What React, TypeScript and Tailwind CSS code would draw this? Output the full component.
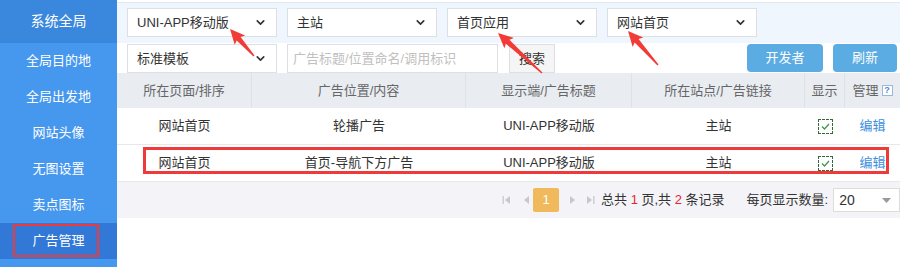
import React from 'react';
import { ChevronDown } from 'lucide-react';

const menu = ['全局目的地', '全局出发地', '网站头像', '无图设置', '卖点图标'];

const rows = [
  { page: '网站首页', pos: '轮播广告', client: 'UNI-APP移动版', site: '主站' },
  { page: '网站首页', pos: '首页-导航下方广告', client: 'UNI-APP移动版', site: '主站' },
];

type Pt = [number, number];

const arrowPoints = (tip: Pt, tail: Pt) => {
  const dx = tail[0] - tip[0];
  const dy = tail[1] - tip[1];
  const len = Math.hypot(dx, dy);
  const ux = dx / len;
  const uy = dy / len;
  const nx = -uy;
  const ny = ux;
  const bx = tip[0] + ux * 13;
  const by = tip[1] + uy * 13;
  const p = (x: number, y: number, k: number) => `${x + nx * k},${y + ny * k}`;
  return [
    `${tip[0]},${tip[1]}`,
    p(bx + ux * 2, by + uy * 2, 7),
    p(bx, by, 2.6),
    p(tail[0], tail[1], 0.7),
    p(tail[0], tail[1], -0.7),
    p(bx, by, -2.6),
    p(bx + ux * 2, by + uy * 2, -7),
  ].join(' ');
};

const arrows: { tip: Pt; tail: Pt }[] = [
  { tip: [230, 29], tail: [254, 56] },
  { tip: [498, 33], tail: [542, 73] },
  { tip: [628, 31], tail: [658, 65] },
];

const Select = ({ value, w = 'w-[150px]' }: { value: string; w?: string }) => (
  <div className={`${w} h-[29px] bg-white border border-[#dcdfe4] flex items-center justify-between pl-[9px] pr-[9px] text-[#333]`}>
    <span>{value}</span>
    <ChevronDown size={13} strokeWidth={3} className="text-[#333]" />
  </div>
);

const Check = () => (
  <div className="w-[15px] h-[15px] border border-dashed border-[#2f6b35] flex items-center justify-center">
    <svg width="9" height="7" viewBox="0 0 9 7">
      <path d="M1 3.5 L3.5 6 L8 1" fill="none" stroke="#3c9a4a" strokeWidth="1.3" />
    </svg>
  </div>
);

const PgIcon = ({ dir, bar }: { dir: 'l' | 'r'; bar?: boolean }) => (
  <svg width="9" height="10" viewBox="0 0 9 10">
    {dir === 'l' ? (
      <>
        {bar && <rect x="0.5" y="1" width="1.3" height="8" fill="#c8c8cc" />}
        <path d="M8 1 L3 5 L8 9 Z" fill="#c8c8cc" />
      </>
    ) : (
      <>
        <path d="M1 1 L6 5 L1 9 Z" fill="#c8c8cc" />
        {bar && <rect x="7.2" y="1" width="1.3" height="8" fill="#c8c8cc" />}
      </>
    )}
  </svg>
);

export default function App() {
  return (
    <div className="relative w-[900px] h-[267px] overflow-hidden bg-white flex text-[13px] font-['Liberation_Sans','Noto_Sans_CJK_SC',sans-serif]">
      {/* sidebar */}
      <div className="w-[117px] shrink-0 bg-[#4697ee] text-white flex flex-col">
        <div className="h-[43px] bg-[#3a87de] flex items-center justify-center text-[14px]">系统全局</div>
        {menu.map((m) => (
          <div key={m} className="h-[36px] flex items-center justify-center">{m}</div>
        ))}
        <div className="h-[36px] bg-[#3278d7] flex items-center justify-center">广告管理</div>
      </div>

      {/* main */}
      <div className="flex-1 flex flex-col pt-[2px]">
        <div className="h-[41px] border-t border-[#e3e8ef] bg-[#f0f6fd] flex items-start gap-[10px] pl-[10px] pt-[5px]">
          <Select value="UNI-APP移动版" />
          <Select value="主站" />
          <Select value="首页应用" />
          <Select value="网站首页" />
        </div>
        <div className="h-[30px] flex items-start pl-[10px] pt-[1px]">
          <Select value="标准模板" />
          <div className="ml-[10px] w-[211px] h-[29px] border border-[#dcdfe4] flex items-center pl-[5px] text-[#c0c0c0]">
            广告标题/位置命名/调用标识
          </div>
          <div className="ml-[11px] w-[46px] h-[29px] border border-[#dcdfe4] bg-[#f5f5f5] flex items-center justify-center text-[#333]">
            搜索
          </div>
          <div className="ml-auto flex gap-[10px] pr-[3px]">
            <div className="w-[76px] h-[28px] rounded-[4px] bg-[#5aace2] text-white flex items-center justify-center">开发者</div>
            <div className="w-[64px] h-[28px] rounded-[4px] bg-[#5aace2] text-white flex items-center justify-center">刷新</div>
          </div>
        </div>

        {/* table */}
        <div className="grid grid-cols-[135px_214px_166px_173px_40px_55px] h-[35px] bg-[#e9edf2] text-[#666]">
          {['所在页面/排序', '广告位置/内容', '显示端/广告标题', '所在站点/广告链接', '显示'].map((h) => (
            <div key={h} className="flex items-center justify-center border-r border-[#dde2e9]">{h}</div>
          ))}
          <div className="flex items-center justify-center gap-[3px]">
            管理
            <span className="w-[11px] h-[11px] border border-[#9bb8d8] bg-white text-[9px] leading-none font-bold text-[#4a8ad4] flex items-center justify-center">?</span>
          </div>
        </div>
        {rows.map((r, i) => (
          <div key={i} className="grid grid-cols-[135px_214px_166px_173px_40px_55px] h-[37px] border-b border-[#e6e8ec] text-[#333]">
            <div className="flex items-center justify-center">{r.page}</div>
            <div className="flex items-center justify-center">{r.pos}</div>
            <div className="flex items-center justify-center">{r.client}</div>
            <div className="flex items-center justify-center">{r.site}</div>
            <div className="flex items-center justify-center"><Check /></div>
            <div className="flex items-center justify-center text-[#3c8fe0]">编辑</div>
          </div>
        ))}

        {/* pagination */}
        <div className="h-[36px] bg-[#f4f4f8] flex items-center pl-[385px] text-[#333]">
          <div className="flex items-center gap-[10px]">
            <PgIcon dir="l" bar />
            <PgIcon dir="l" />
          </div>
          <div className="ml-[3px] w-[26px] h-[24px] rounded-[2px] bg-[#f0b95b] text-white flex items-center justify-center">1</div>
          <div className="ml-[10px] flex items-center gap-[8px]">
            <PgIcon dir="r" />
            <PgIcon dir="r" bar />
          </div>
          <div className="ml-[6px]">
            总共<span className="text-[#e5262c]"> 1 </span>页,共<span className="text-[#e5262c]"> 2 </span>条记录
          </div>
          <div className="ml-[22px]">每页显示数量:</div>
          <div className="ml-[5px] flex-1 h-[24px] bg-white border border-[#dcdcdc] flex items-center justify-between pl-[5px] pr-[8px] text-[14px]">
            20
            <svg width="9" height="5" viewBox="0 0 9 5"><path d="M0 0 L9 0 L4.5 5 Z" fill="#999" /></svg>
          </div>
        </div>
      </div>

      {/* annotations */}
      <div className="absolute left-[13px] top-[224px] w-[86px] h-[33px] border-2 border-[#f03a3a]" />
      <div className="absolute left-[143px] top-[147px] w-[746px] h-[27px] border-[3px] border-[#f03a3a]" />
      <svg className="absolute inset-0 pointer-events-none" width="900" height="267">
        {arrows.map((a, i) => (
          <polygon key={i} points={arrowPoints(a.tip, a.tail)} fill="#f23b36" />
        ))}
      </svg>
    </div>
  );
}
